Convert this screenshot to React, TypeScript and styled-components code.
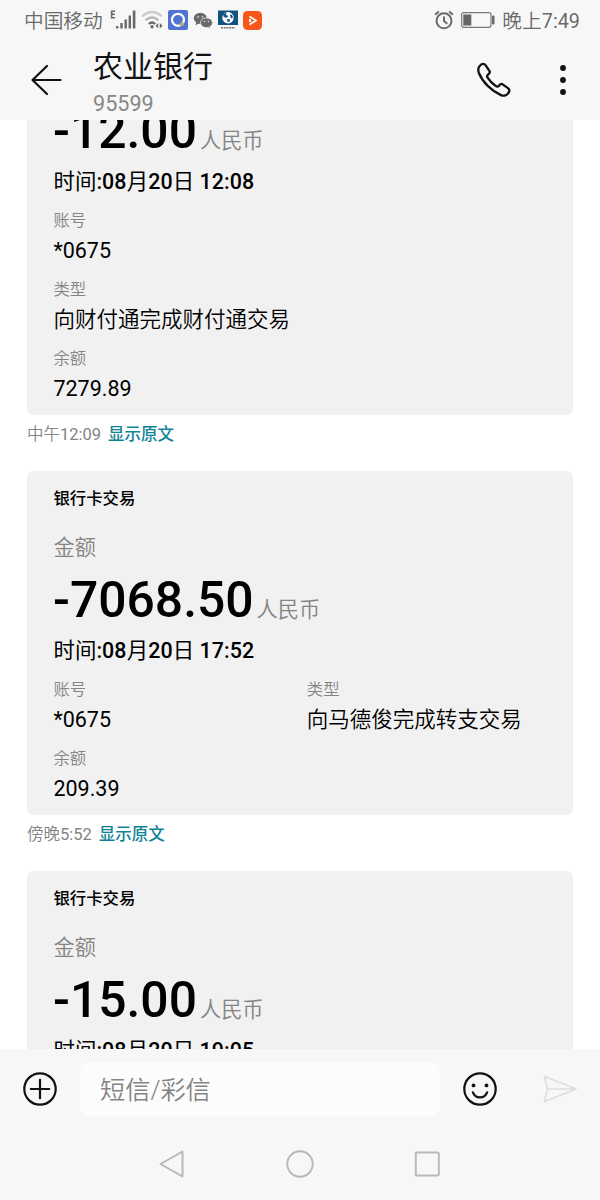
import React from 'react';
import styled, { createGlobalStyle } from 'styled-components';

const GlobalStyle = createGlobalStyle`
  * { box-sizing: border-box; }
  body {
    margin: 0;
    background: #fff;
    font-family: Roboto, "Noto Sans CJK SC", sans-serif;
    color: #000;
  }
  svg { display: block; flex: none; }
`;

const Phone = styled.div`
  width: 600px;
  height: 1200px;
  display: flex;
  flex-direction: column;
  overflow: hidden;
  white-space: nowrap;
`;

const StatusBar = styled.div`
  height: 40px;
  flex: none;
  display: flex;
  align-items: center;
  justify-content: space-between;
  padding: 0 20px 0 24px;
  background: #f7f7f7;
  color: #6a6a6a;
  font-size: 19.7px;
  line-height: 30px;
  font-weight: 350;
`;

const StatusGroup = styled.div<{ $gap: number }>`
  display: flex;
  align-items: center;
  gap: ${(p) => p.$gap}px;
`;

const StatusText = styled.span<{ $size: number }>`
  padding-top: 3px;
  font-size: ${(p) => p.$size}px;
`;

const Digits = styled.span`
  font-weight: 400;
`;

const Header = styled.header`
  height: 80px;
  flex: none;
  display: flex;
  align-items: center;
  padding: 0 34px 0 30px;
  background: #f7f7f7;
`;

const Contact = styled.div`
  flex: 1;
  margin-left: 30px;
  padding-top: 1px;
`;

const ContactName = styled.div`
  font-size: 30px;
  line-height: 46px;
  color: #111;
`;

const ContactNumber = styled.div`
  font-size: 21.6px;
  line-height: 28px;
  color: #888;
`;

const HeaderActions = styled.div`
  display: flex;
  align-items: center;
  gap: 48px;
`;

const Messages = styled.main`
  flex: 1;
  min-height: 0;
  overflow: hidden;
  background: #fff;
`;

const Scrolled = styled.div`
  margin-top: -118px;
  padding: 0 27px;
`;

const Card = styled.section`
  background: #f1f1f1;
  border-radius: 6px;
  padding: 16px 26.4px 11px;
`;

const CardTitle = styled.div`
  font-size: 16.4px;
  line-height: 24px;
  font-weight: 500;
`;

const AmountLabel = styled.div`
  margin-top: 21px;
  font-size: 21.3px;
  line-height: 32px;
  font-weight: 350;
  color: #848484;
`;

const Amount = styled.div`
  display: flex;
  align-items: baseline;
  height: 72px;
  line-height: 72px;
`;

const Figure = styled.span`
  margin-left: -0.4px;
  font-size: 49.8px;
  font-weight: 500;
`;

const Currency = styled.span`
  margin-left: 3px;
  font-size: 21.2px;
  font-weight: 350;
  color: #848484;
`;

const Time = styled.div`
  font-size: 21.4px;
  line-height: 30px;
  letter-spacing: 0.1px;
  font-weight: 500;
`;

const TimeUnit = styled.span`
  font-weight: 400;
`;

const Fields = styled.div<{ $columns: number }>`
  margin-top: 13px;
  display: grid;
  grid-template-columns: repeat(${(p) => p.$columns}, 253.4px);
  row-gap: 13px;
`;

const FieldLabel = styled.div`
  font-size: 16.4px;
  line-height: 22px;
  font-weight: 350;
  color: #848484;
`;

const FieldValue = styled.div<{ $numeric: boolean }>`
  margin-top: 4px;
  font-size: 21.5px;
  line-height: 30px;
  font-weight: ${(p) => (p.$numeric ? 400 : 350)};
`;

const Meta = styled.div`
  height: 56px;
  padding-top: 8px;
  display: flex;
  gap: 7px;
  font-size: 16.5px;
  line-height: 24px;
  font-weight: 350;
  color: #848484;
`;

const OriginalLink = styled.a`
  font-weight: 500;
  color: #0f8497;
`;

const Composer = styled.div`
  height: 80px;
  flex: none;
  display: flex;
  align-items: center;
  padding: 0 22px;
  background: #f7f7f7;
`;

const Input = styled.div`
  width: 360px;
  height: 54px;
  margin: 0 22px;
  padding: 3px 0 0 20px;
  border-radius: 10px;
  background: #fcfcfc;
  color: #848484;
  font-size: 25.2px;
  line-height: 51px;
  font-weight: 350;
`;

const SendSlot = styled.div`
  flex: none;
  margin-left: 43px;
`;

const NavBar = styled.nav`
  height: 71px;
  flex: none;
  display: flex;
  justify-content: center;
  gap: 98px;
  align-items: center;
  padding-bottom: 1px;
  background: #f7f7f7;
`;

const SignalIcon = () => (
  <svg width="26" height="22" viewBox="0 0 26 22" fill="#6a6a6a">
    <path d="M0.800 1.500h4.300V3H2.500v1.600h2.300V6H2.500v1.900h2.600v1.500H0.800z" />
    <path d="M6 17h2.400v2.500H6zM10.300 14h2.400v5.500h-2.400zM14.500 10.500h2.400v9h-2.400zM18.600 6.500h2.400v13h-2.400zM22.800 1.500h2.600v18h-2.600z" />
  </svg>
);

const WifiIcon = () => (
  <svg width="22" height="22" viewBox="0 0 22 22" fill="none">
    <path d="M1 7.500Q11 -1.500 21 7.500" stroke="#cbcbcb" strokeWidth="2.200" />
    <path d="M4.500 11.300Q11 5.500 17.500 11.300" stroke="#b5b5b5" strokeWidth="2.200" />
    <path d="M7.800 15Q11 12 14.200 15" stroke="#6a6a6a" strokeWidth="2.200" />
    <circle cx="11" cy="17.800" r="1.700" fill="#6a6a6a" />
    <path d="M17.200 14v5.500L14.600 16.700zM18.800 14v5.500l2.800-2.800z" fill="#6a6a6a" />
  </svg>
);

const BrowserBadge = () => (
  <svg width="20" height="20" viewBox="0 0 20 20">
    <rect width="20" height="20" rx="2" fill="#4f74d4" />
    <circle cx="10" cy="9.800" r="6" fill="none" stroke="#fff" strokeWidth="2.300" />
    <circle cx="13.800" cy="14.200" r="2.100" fill="#b5a878" />
  </svg>
);

const ChatBadge = () => (
  <svg width="20" height="20" viewBox="0 0 20 20">
    <path d="M2.500 15.500 3 12.500h4z" fill="#6a6a6a" />
    <ellipse cx="7.300" cy="8.300" rx="6.500" ry="5.600" fill="#6a6a6a" />
    <path d="M17 18.500 16.500 15.500h-4z" fill="#6a6a6a" />
    <ellipse cx="13.500" cy="12.800" rx="6" ry="4.900" fill="#6a6a6a" stroke="#f7f7f7" strokeWidth="0.700" />
    <g fill="#d5d5d5">
      <circle cx="5" cy="6.800" r="0.900" />
      <circle cx="9.500" cy="6.800" r="0.900" />
      <circle cx="11.500" cy="11.500" r="0.800" />
      <circle cx="15.500" cy="11.500" r="0.800" />
    </g>
  </svg>
);

const GlobeBadge = () => (
  <svg width="20" height="20" viewBox="0 0 20 20">
    <rect y="0.500" width="20" height="14.500" fill="#105383" />
    <circle cx="10" cy="7.800" r="5.700" fill="#fff" />
    <path d="M5 4.500 8.500 2.500 8 5 10.500 6 8 8 5.500 6.500zM11.800 4.500 14 5 15 7.500 13 8.500zM8.500 9.500 12 9 11.500 12 9.500 11.500z" fill="#105383" />
    <path d="M3 17.800h14" stroke="#777" strokeWidth="1.500" strokeDasharray="2 0.700" />
  </svg>
);

const VideoBadge = () => (
  <svg width="19" height="19" viewBox="0 0 19 19">
    <rect width="19" height="19" rx="4.500" fill="#f8571c" />
    <path d="M6.500 5.500 13 9.500 6.500 13.500M7 8v3" fill="none" stroke="#fff" strokeWidth="1.900" strokeLinejoin="round" />
  </svg>
);

const AlarmIcon = () => (
  <svg width="20" height="20" viewBox="0 0 20 20" fill="none" stroke="#6a6a6a" strokeWidth="2">
    <circle cx="10" cy="10.800" r="7.500" />
    <path d="M10 6.500v4.500l3.300 2.800M1.200 4.700 4.800 1.500M18.800 4.700 15.200 1.500" />
  </svg>
);

const BatteryIcon = () => (
  <svg width="34" height="16" viewBox="0 0 34 16">
    <rect x="0.700" y="0.700" width="29.300" height="14.600" rx="2" fill="none" stroke="#777" strokeWidth="1.200" />
    <rect x="2.300" y="2.500" width="8" height="11" fill="#666" />
    <rect x="31" y="3.500" width="2.500" height="9" rx="0.800" fill="#6a6a6a" />
  </svg>
);

const BackIcon = () => (
  <svg width="33" height="32" viewBox="0 0 33 32" fill="none" stroke="#111" strokeWidth="2.200" strokeLinecap="round" strokeLinejoin="round">
    <path d="M30.500 16H2.500M17 2 2.500 16 17 30" />
  </svg>
);

const PhoneIcon = () => (
  <svg width="36" height="36" viewBox="0 0 36 36" fill="none" stroke="#111" strokeWidth="2.300" strokeLinejoin="round">
    <path d="M3.200 4.600C4.600 2.600 6.700 1.400 8.500 2.200C9.200 2.500 9.600 3.300 10.200 4.200L13.700 9.300C14.500 10.600 13.300 11.500 12.200 12.400C10.800 13.600 10.900 14.500 11.600 15.600C13.700 19 16.400 21.700 19.800 24C21 24.700 22 24.800 23 23.700C24 22.500 24.900 21.300 26.200 22.100L32 26.100C33.400 27.100 33.800 28.300 33 29.900C31.600 32.700 28.500 34.600 25 33.100C15.500 29 6.500 20 2.900 11C2 8.500 2 6.400 3.200 4.600Z" />
  </svg>
);

const MoreIcon = () => (
  <svg width="6" height="32" viewBox="0 0 6 32" fill="#111">
    <circle cx="3" cy="4" r="2.900" />
    <circle cx="3" cy="16" r="2.900" />
    <circle cx="3" cy="28" r="2.900" />
  </svg>
);

const AddIcon = () => (
  <svg width="36" height="36" viewBox="0 0 36 36" fill="none" stroke="#111" strokeWidth="2.200" strokeLinecap="round">
    <circle cx="18" cy="18" r="15.700" />
    <path d="M18 8.800v18.400M8.800 18h18.400" />
  </svg>
);

const SmileIcon = () => (
  <svg width="36" height="36" viewBox="0 0 36 36" fill="none" stroke="#111" strokeWidth="2.200" strokeLinecap="round">
    <circle cx="18" cy="18" r="15.700" />
    <path d="M10.900 21.300C13.200 28 22.800 28 25.100 21.300" />
    <circle cx="11.500" cy="14.400" r="1.900" fill="#111" stroke="none" />
    <circle cx="24.500" cy="14.400" r="1.900" fill="#111" stroke="none" />
  </svg>
);

const SendIcon = () => (
  <svg width="36" height="30" viewBox="0 0 36 30" fill="none" stroke="#dedede" strokeWidth="1.700" strokeLinejoin="round">
    <path d="M3.500 2.500 35 15 3.500 27.500 6.500 15zM6.500 15h28" />
  </svg>
);

const NavBack = () => (
  <svg width="30" height="30" viewBox="0 0 30 30" fill="none" stroke="#b8b8b8" strokeWidth="2" strokeLinejoin="round">
    <path d="M3.500 15 25.500 2.500v25z" />
  </svg>
);

const NavHome = () => (
  <svg width="30" height="30" viewBox="0 0 30 30" fill="none" stroke="#b8b8b8" strokeWidth="1.900">
    <circle cx="15" cy="15" r="12.700" />
  </svg>
);

const NavRecent = () => (
  <svg width="30" height="30" viewBox="0 0 30 30" fill="none" stroke="#b8b8b8" strokeWidth="1.900">
    <rect x="2.800" y="3.500" width="23" height="23" rx="1" />
  </svg>
);

type Transaction = {
  amount: string;
  clock: string;
  columns: number;
  fields: [string, string][];
  received?: { period: string; clock: string };
};

const transactions: Transaction[] = [
  {
    amount: '-12.00',
    clock: '12:08',
    columns: 1,
    fields: [['账号', '*0675'], ['类型', '向财付通完成财付通交易'], ['余额', '7279.89']],
    received: { period: '中午', clock: '12:09' },
  },
  {
    amount: '-7068.50',
    clock: '17:52',
    columns: 2,
    fields: [['账号', '*0675'], ['类型', '向马德俊完成转支交易'], ['余额', '209.39']],
    received: { period: '傍晚', clock: '5:52' },
  },
  {
    amount: '-15.00',
    clock: '19:05',
    columns: 1,
    fields: [],
  },
];

const TransactionMessage = ({ item }: { item: Transaction }) => (
  <article>
    <Card>
      <CardTitle>银行卡交易</CardTitle>
      <AmountLabel>金额</AmountLabel>
      <Amount>
        <Figure>{item.amount}</Figure>
        <Currency>人民币</Currency>
      </Amount>
      <Time>
        <TimeUnit>时间</TimeUnit>:08<TimeUnit>月</TimeUnit>20<TimeUnit>日</TimeUnit> {item.clock}
      </Time>
      <Fields $columns={item.columns}>
        {item.fields.map(([label, value]) => (
          <div key={label}>
            <FieldLabel>{label}</FieldLabel>
            <FieldValue $numeric={/\d/.test(value)}>{value}</FieldValue>
          </div>
        ))}
      </Fields>
    </Card>
    {item.received && (
      <Meta>
        <span>
          {item.received.period}
          <Digits>{item.received.clock}</Digits>
        </span>
        <OriginalLink>显示原文</OriginalLink>
      </Meta>
    )}
  </article>
);

export default function App() {
  return (
    <Phone>
      <GlobalStyle />
      <StatusBar>
        <StatusGroup $gap={7}>
          <StatusText $size={19.7}>中国移动</StatusText>
          <StatusGroup $gap={5}>
            <SignalIcon />
            <WifiIcon />
            <BrowserBadge />
            <ChatBadge />
            <GlobeBadge />
            <VideoBadge />
          </StatusGroup>
        </StatusGroup>
        <StatusGroup $gap={7}>
          <AlarmIcon />
          <BatteryIcon />
          <StatusText $size={19.8}>
            晚上<Digits>7:49</Digits>
          </StatusText>
        </StatusGroup>
      </StatusBar>
      <Header>
        <BackIcon />
        <Contact>
          <ContactName>农业银行</ContactName>
          <ContactNumber>95599</ContactNumber>
        </Contact>
        <HeaderActions>
          <PhoneIcon />
          <MoreIcon />
        </HeaderActions>
      </Header>
      <Messages>
        <Scrolled>
          {transactions.map((item) => (
            <TransactionMessage key={item.clock} item={item} />
          ))}
        </Scrolled>
      </Messages>
      <Composer>
        <AddIcon />
        <Input>短信/彩信</Input>
        <SmileIcon />
        <SendSlot>
          <SendIcon />
        </SendSlot>
      </Composer>
      <NavBar>
        <NavBack />
        <NavHome />
        <NavRecent />
      </NavBar>
    </Phone>
  );
}
